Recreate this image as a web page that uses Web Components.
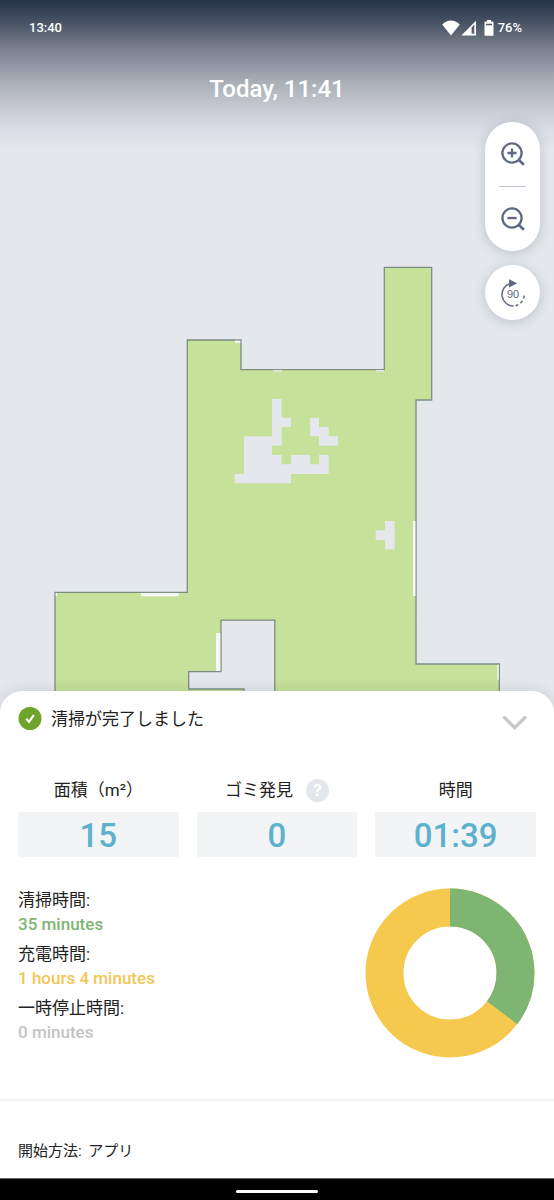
<!DOCTYPE html>
<html lang="ja">
<head>
<meta charset="utf-8">
<meta name="viewport" content="width=device-width, initial-scale=1">
<title>清掃レポート</title>
<style>
  html, body { margin: 0; height: 100%; }
  body {
    font-family: Roboto, "Noto Sans CJK JP", sans-serif;
    color: #222;
    background: #000;
  }
</style>
</head>
<body>
<cleaning-report></cleaning-report>

<script>
const define = (name, html, setup) => {
  const template = document.createElement('template');
  template.innerHTML = html;
  customElements.define(name, class extends HTMLElement {
    constructor() {
      super();
      this.attachShadow({ mode: 'open' }).append(template.content.cloneNode(true));
    }
    connectedCallback() { if (setup) setup(this, this.shadowRoot); }
  });
};

define('status-bar', `
  <style>
    :host { display: flex; align-items: center; justify-content: space-between; height: 56px; padding: 0 32px 0 29px; color: #fff; font-size: 13px; font-weight: 500; line-height: 16px; }
    .right { display: flex; align-items: center; }
    .signal { margin-left: 1px; }
    .battery { margin: 0 4px 0 7px; }
    svg { display: block; }
  </style>
  <time>13:40</time>
  <div class="right">
    <svg width="18" height="16" viewBox="0 0 18 16" aria-hidden="true"><path d="M9 15.6 .2 4.4C3 1.600 6 .4 9 .4s6 1.200 8.800 4z" fill="#fff"/></svg>
    <svg class="signal" width="16" height="16" viewBox="0 0 16 16" aria-hidden="true"><path fill-rule="evenodd" d="M15 .8v14.600H.4zM13.300 4.600 10.600 7.400v6.300h2.700z" fill="#fff"/></svg>
    <svg class="battery" width="10" height="16" viewBox="0 0 10 16" aria-hidden="true"><path fill-rule="evenodd" d="M3 0h4v1.6h1.6q.9 0 .9.9v12.3q0 .9-.9.9H1.4q-.9 0-.9-.9V2.500q0-.9.9-.9H3zM2 3.700v1.600h6V3.700z" fill="#fff"/></svg>
    <span>76%</span>
  </div>
`);

define('report-heading', `
  <style>
    :host { display: block; }
    h1 { margin: 0; padding: 17px 0 0; color: #fff; font-size: 24px; font-weight: 500; line-height: 32px; text-align: center; }
  </style>
  <h1><slot></slot></h1>
`);

define('floor-map', `
  <style>
    :host { display: block; overflow: hidden; background: #e4e8ec; }
    svg { display: block; width: 100%; height: 100%; }
  </style>
  <svg viewBox="0 0 554 715" preserveAspectRatio="xMidYMin slice" role="img" aria-label="清掃マップ">
    <path fill="#c6e199" stroke="#7c8d84" stroke-width="1.300" fill-rule="evenodd"
      d="M187.300 340H241V369.700H384.300V267.300H431.700V400H416V664H499.300V740H244V689H188.700V671.700H221V620.200H274.800V730H244V740H55V592.300H187.300Z"/>
    <g fill="#e4e8ec">
      <path transform="translate(170 250) scale(.33333)" d="M306 447H335V503H363V531H335V587H306V615H335V643H363V615H420V643H447V615H476V672H363V700H194V672H222V559H306ZM420 503H447V531H476V559H504V587H447V559H420Z"/>
      <path transform="translate(340 490) scale(.33333)" d="M135 93H164V178H135V150H107V121H135Z"/>
      <rect x="273" y="370" width="9" height="1.500"/>
      <rect x="376" y="370" width="8" height="1.500"/>
    </g>
    <g fill="#f7f9f8">
      <rect x="235" y="340.700" width="5.300" height="2.300"/>
      <rect x="413" y="521" width="2.400" height="75"/>
      <rect x="497.300" y="664.700" width="1.400" height="15"/>
      <rect x="141" y="593" width="37.700" height="3.300"/>
      <rect x="216" y="633" width="4.300" height="38"/>
      <rect x="55.700" y="593" width="1.300" height="3"/>
    </g>
  </svg>
`);

define('map-controls', `
  <style>
    :host { display: flex; flex-direction: column; gap: 14px; width: 55px; }
    .pill, .round { background: #fff; border-radius: 28px; box-shadow: 0 2px 12px rgba(60, 70, 90, .24); }
    .pill { display: flex; flex-direction: column; align-items: center; }
    button { display: grid; place-items: center; width: 55px; height: 64px; padding: 0; border: 0; background: none; color: #5d6980; }
    .round button { height: 55px; }
    hr { width: 27px; height: 1px; margin: 0; border: 0; background: #bcc3cf; }
    svg { display: block; font-family: "Liberation Sans", sans-serif; }
  </style>
  <div class="pill">
    <button type="button" aria-label="拡大">
      <svg width="26" height="26" viewBox="0 0 26 26" fill="none" stroke="currentColor" stroke-width="2.300"><circle cx="12" cy="12" r="9.600"/><path d="M7.400 12h9.200M12 7.400v9.200"/><path d="m18.600 18.600 5.200 5.200" stroke-width="2.700"/></svg>
    </button>
    <hr>
    <button type="button" aria-label="縮小">
      <svg width="26" height="26" viewBox="0 0 26 26" fill="none" stroke="currentColor" stroke-width="2.300"><circle cx="12" cy="12" r="9.600"/><path d="M7.400 12h9.200"/><path d="m18.600 18.600 5.200 5.200" stroke-width="2.700"/></svg>
    </button>
  </div>
  <div class="round">
    <button type="button" aria-label="90度回転">
      <svg width="30" height="30" viewBox="0 0 30 30" fill="none" stroke="currentColor" stroke-width="1.500">
        <path d="M12.500 5.400A11.500 11.500 0 0 0 15.600 28"/>
        <path d="M17.500 27.800A11.500 11.500 0 0 0 26.200 16" stroke-dasharray="3 2.600"/>
        <path d="M11 1.200 19.200 5.300 11 9.400Z" fill="currentColor" stroke="none"/>
        <text x="15" y="20" font-size="11" text-anchor="middle" fill="currentColor" stroke="none">90</text>
      </svg>
    </button>
  </div>
`);

define('sheet-header', `
  <style>
    :host { display: flex; align-items: center; height: 55px; padding: 0 18px; }
    h2 { flex: 1; margin: 0 0 0 9px; font-size: 17px; font-weight: 400; line-height: 24px; }
    button { display: grid; place-items: center; width: 42px; height: 40px; padding: 8px 0 0; border: 0; background: none; box-sizing: border-box; }
    svg { display: block; }
  </style>
  <svg width="24" height="24" viewBox="0 0 24 24" aria-hidden="true"><circle cx="12" cy="11.500" r="11.500" fill="#6fa32c"/><path d="m8.200 11.800 2.800 3 4.800-6.600" fill="none" stroke="#fff" stroke-width="2.200"/></svg>
  <h2><slot></slot></h2>
  <button type="button" aria-label="閉じる">
    <svg width="26" height="18" viewBox="0 0 26 18" aria-hidden="true"><path d="m2.500 3.500 10.200 10.200L23 3.500" fill="none" stroke="#c9c9c9" stroke-width="3.400" stroke-linecap="round"/></svg>
  </button>
`);

define('stat-tile', `
  <style>
    :host { display: flex; flex-direction: column; gap: 10px; }
    .label { display: flex; align-items: center; justify-content: center; gap: 13px; height: 24px; font-size: 17px; line-height: 24px; }
    .value { background: #f3f4f5; color: #5cb2cd; font-size: 33px; font-weight: 500; line-height: 43px; height: 45px; padding-top: 2px; box-sizing: border-box; text-align: center; }
  </style>
  <div class="label"><slot name="label"></slot><slot name="help"></slot></div>
  <div class="value"><slot></slot></div>
`);

define('help-button', `
  <style>
    :host { display: block; }
    button { display: block; width: 23px; height: 23px; padding: 0; border: 0; border-radius: 50%; background: #e4e8ec; color: #fff; font: 700 17px/23px Roboto, sans-serif; text-align: center; }
  </style>
  <button type="button" aria-label="ヘルプ">?</button>
`);

define('time-entry', `
  <style>
    :host { display: block; font-size: 17px; line-height: 24px; }
    .value { color: var(--tone); font-weight: 500; }
  </style>
  <div><slot name="label"></slot></div>
  <div class="value"><slot></slot></div>
`);

define('time-donut', `
  <style>
    :host { display: block; width: 170px; height: 170px; }
    svg { display: block; transform: rotate(-90deg); }
    circle { fill: none; stroke-width: 38; }
  </style>
  <svg width="170" height="170" viewBox="0 0 170 170" role="img" aria-label="時間の内訳">
    <circle cx="85" cy="85" r="65.500" stroke="#f5c84e"/>
    <circle id="part" cx="85" cy="85" r="65.500" stroke="#7fb573" pathLength="100"/>
  </svg>
`, (host, root) => {
  const cleaning = Number(host.getAttribute('cleaning'));
  const charging = Number(host.getAttribute('charging'));
  const share = 100 * cleaning / (cleaning + charging);
  root.getElementById('part').setAttribute('stroke-dasharray', share + ' ' + (100 - share));
});

define('report-sheet', `
  <style>
    :host { display: block; background: #fff; border-radius: 22px 22px 0 0; box-shadow: 0 0 14px rgba(60, 70, 90, .16); }
    .stats { display: grid; grid-template-columns: repeat(3, 1fr); gap: 18px; padding: 32px 18px 0; }
    .times { display: flex; justify-content: space-between; align-items: flex-end; padding: 31px 19px 41px 18px; }
    .list { display: flex; flex-direction: column; gap: 6px; align-self: flex-start; }
    footer { border-top: 2px solid #f1f1f1; padding: 38px 18px 15px; font-size: 15px; line-height: 24px; }
    footer span { margin-left: 3px; }
  </style>
  <sheet-header>清掃が完了しました</sheet-header>
  <div class="stats">
    <stat-tile><span slot="label">面積（m²）</span>15</stat-tile>
    <stat-tile><span slot="label">ゴミ発見</span><help-button slot="help"></help-button>0</stat-tile>
    <stat-tile><span slot="label">時間</span>01:39</stat-tile>
  </div>
  <div class="times">
    <div class="list">
      <time-entry style="--tone:#7fb573"><span slot="label">清掃時間:</span>35 minutes</time-entry>
      <time-entry style="--tone:#f2c755"><span slot="label">充電時間:</span>1 hours 4 minutes</time-entry>
      <time-entry style="--tone:#c4c4c4"><span slot="label">一時停止時間:</span>0 minutes</time-entry>
    </div>
    <time-donut cleaning="35" charging="64"></time-donut>
  </div>
  <footer>開始方法: <span>アプリ</span></footer>
`);

define('gesture-bar', `
  <style>
    :host { display: flex; justify-content: center; align-items: flex-end; height: 22px; padding-bottom: 7px; box-sizing: border-box; background: #000; border-top: 1px solid #666; }
    i { width: 82px; height: 3px; border-radius: 2px; background: #fff; }
  </style>
  <i></i>
`);

define('cleaning-report', `
  <style>
    :host { display: flex; flex-direction: column; min-height: 100vh; }
    .stage { flex: 1; display: grid; min-height: 350px; margin-bottom: -24px; }
    .stage > * { grid-area: 1 / 1; min-height: 0; }
    floor-map { contain: size; }
    .overlay { display: flex; flex-direction: column; }
    .overlay, report-sheet { position: relative; }
    .shade { height: 150px; background: linear-gradient(#253348 0, #465264 22px, #767c89 46px, #8d93a1 63px, #a7adb3 80px, #b9bdc3 96px, #cacbd4 110px, #d8dbe2 128px, #e4e8ec 150px); }
    map-controls { align-self: flex-end; margin: -28px 14px 0 0; }
  </style>
  <div class="stage">
    <floor-map></floor-map>
    <div class="overlay">
      <div class="shade">
        <status-bar></status-bar>
        <report-heading>Today, 11:41</report-heading>
      </div>
      <map-controls></map-controls>
    </div>
  </div>
  <report-sheet></report-sheet>
  <gesture-bar></gesture-bar>
`);
</script>
</body>
</html>
